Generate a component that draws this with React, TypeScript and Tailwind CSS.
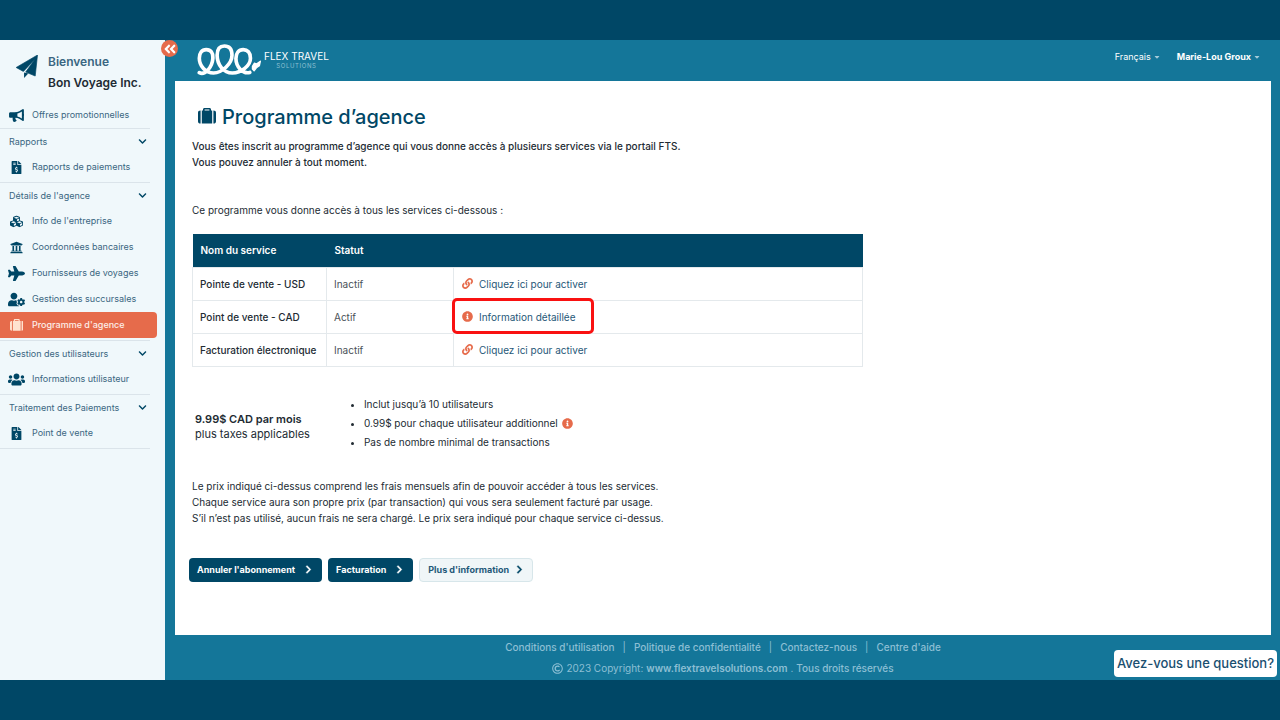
import type { ComponentType, ReactNode } from "react";
import {
  FaAngleDoubleLeft,
  FaCaretDown,
  FaChevronDown,
  FaChevronRight,
  FaCubes,
  FaFileInvoiceDollar,
  FaInfoCircle,
  FaLink,
  FaPlane,
  FaRegCopyright,
  FaUniversity,
  FaUserCog,
  FaUsers,
} from "react-icons/fa";

type IconProps = { className?: string };
type Item = { label: string; icon: ComponentType<IconProps>; wide?: boolean; active?: boolean };
type Group = { title: string; items: Item[] };

function Luggage({ className }: IconProps) {
  return (
    <svg viewBox="0 0 18 16" width="1.125em" height="1em" fill="currentColor" className={className} aria-hidden="true">
      <path d="M2.600 2.500v13C.8 15.500 0 14.600 0 13.200V4.800c0-1.400.8-2.300 2.600-2.300z" />
      <path d="M15.400 2.500v13c1.800 0 2.600-.9 2.600-2.300V4.800c0-1.400-.8-2.300-2.600-2.300z" />
      <path d="M3.800 2.500h1.200V1.500C5 .6 5.600 0 6.500 0h5c.9 0 1.500.6 1.500 1.500v1h1.200v13H3.800zM6.600 1.500v1h4.800v-1z" />
    </svg>
  );
}

function Megaphone({ className }: IconProps) {
  return (
    <svg viewBox="0 0 16 14" width="1.15em" height="1em" fill="currentColor" className={className} aria-hidden="true">
      <path
        fillRule="evenodd"
        d="M15 0c.6 0 1 .4 1 1v4.500c.4.6.4 1.400 0 2V12c0 .7-.6 1.100-1.200.8C12 11 10 9.700 7 9.500c-.5 1.300.3 2.100 1.300 3-.8 1.500-3 1.700-3.800 1C4 12.300 3.600 10.900 4 9.500H1.500C.6 9.500 0 8.900 0 8V5c0-.9.6-1.500 1.500-1.500H6C10 3.500 12.500 1.500 15 0zM13.800 2.700C12 4 10.500 4.600 9 4.900v3.200c1.700.3 3.200 1 4.800 2z"
      />
    </svg>
  );
}

function PaperPlane({ className }: IconProps) {
  return (
    <svg viewBox="0 0 66 70" fill="currentColor" className={className} aria-hidden="true">
      <path d="M65 0L0 38l22 12L57 13 29 52l29 12z" stroke="currentColor" strokeWidth="2" strokeLinejoin="round" />
      <path d="M24 53v17l13-14z" />
    </svg>
  );
}

function Logo() {
  return (
    <svg viewBox="0 0 200 100" className="h-[33px] w-[66px]" fill="none" aria-hidden="true">
      <path
        d="M7 87C24 96 46 70 48 44C49 26 42 17 28 17C14 17 7 28 7 43C7 66 26 88 50 88C76 87 106 60 106 34C106 14 97 6 83 6C69 6 61 16 61 34C61 62 80 88 107 88C134 87 162 66 162 43C162 26 153 17 140 17C126 17 118 28 118 44C118 68 138 92 160 86"
        stroke="#fff"
        strokeWidth="11"
        strokeLinecap="round"
      />
      <path d="M168 68l6-10 6 3 12-9-3 14-9 6-7 9-5-5z" fill="#fff" stroke="#fff" strokeWidth="4" strokeLinejoin="round" />
    </svg>
  );
}

const groups: Group[] = [
  { title: "Rapports", items: [{ label: "Rapports de paiements", icon: FaFileInvoiceDollar }] },
  {
    title: "Détails de l'agence",
    items: [
      { label: "Info de l'entreprise", icon: FaCubes },
      { label: "Coordonnées bancaires", icon: FaUniversity },
      { label: "Fournisseurs de voyages", icon: FaPlane, wide: true },
      { label: "Gestion des succursales", icon: FaUserCog, wide: true },
      { label: "Programme d'agence", icon: Luggage, active: true },
    ],
  },
  { title: "Gestion des utilisateurs", items: [{ label: "Informations utilisateur", icon: FaUsers, wide: true }] },
  { title: "Traitement des Paiements", items: [{ label: "Point de vente", icon: FaFileInvoiceDollar }] },
];

const services = [
  { name: "Pointe de vente - USD", status: "Inactif", action: "Cliquez ici pour activer", icon: FaLink, marked: false },
  { name: "Point de vente - CAD", status: "Actif", action: "Information détaillée", icon: FaInfoCircle, marked: true },
  { name: "Facturation électronique", status: "Inactif", action: "Cliquez ici pour activer", icon: FaLink, marked: false },
];

const footerLinks = ["Conditions d'utilisation", "Politique de confidentialité", "Contactez-nous", "Centre d'aide"];

function NavItem({ label, icon: Icon, wide, active }: Item) {
  return (
    <a
      href="#"
      className={
        active
          ? "mr-2 flex h-[26px] items-center rounded-r bg-[#e66b4b] text-[9px] font-medium text-[#fdeee9]"
          : "mr-2 flex h-[26px] items-center text-[9px] text-[#3a6681]"
      }
    >
      <span className={active ? "flex w-8 justify-center pl-px text-[#ffe3d0]" : "flex w-8 justify-center pl-px text-[#004766]"}>
        <Icon className={wide ? "text-[17px]" : active ? "text-xs" : "text-[13px]"} />
      </span>
      {label}
    </a>
  );
}

function DarkButton({ children }: { children: ReactNode }) {
  return (
    <button
      type="button"
      className="flex h-6 items-center gap-[9px] rounded-sm bg-[#004766] pr-[9px] pl-2 text-[9px] font-bold text-white"
    >
      {children}
      <FaChevronRight className="text-[9px]" stroke="currentColor" strokeWidth="20" />
    </button>
  );
}

export default function App() {
  return (
    <div className="flex min-h-screen flex-col bg-[#004766] py-10 font-['Inter',sans-serif] text-[#222b33]">
      <div className="flex flex-1 bg-[#147699]">
        <aside className="w-[165px] shrink-0 bg-[#f0f8fb]">
          <div className="flex h-[62px] gap-2 pt-[11px] pl-4">
            <PaperPlane className="mt-1 h-[23px] w-[22px] shrink-0 text-[#004766]" />
            <div className="pl-[2px] text-xs leading-[21px] font-semibold whitespace-nowrap">
              <p className="text-[#3a6681]">Bienvenue</p>
              <p>Bon Voyage Inc.</p>
            </div>
          </div>
          <nav>
            <NavItem label="Offres promotionnelles" icon={Megaphone} />
            {groups.map((group) => (
              <section key={group.title} className="pb-[2px]">
                <button
                  type="button"
                  className="flex h-[26px] w-[150px] items-center justify-between border-t border-[#dbe4ea] pr-[3px] pl-[9px] text-[9px] text-[#3a6681]"
                >
                  {group.title}
                  <FaChevronDown className="text-[9px] text-[#004766]" />
                </button>
                {group.items.map((item) => (
                  <NavItem key={item.label} {...item} />
                ))}
              </section>
            ))}
            <div className="w-[150px] border-t border-[#dbe4ea]" />
          </nav>
        </aside>

        <div className="relative flex min-w-0 flex-1 flex-col pr-[9px] pl-[10px]">
          <button
            type="button"
            aria-label="Réduire le menu"
            className="absolute top-0 -left-1 flex size-[17px] items-center justify-center rounded-full bg-[#e66b4b] text-sm text-white"
          >
            <FaAngleDoubleLeft />
          </button>
          <header className="flex h-[41px] items-center justify-between pr-[10px] pl-[22px] text-white">
            <div className="flex items-center gap-px">
              <Logo />
              <div className="pb-px text-center">
                <p className="text-[10px] leading-[11px]">FLEX TRAVEL</p>
                <p className="text-[6px] leading-2 tracking-widest text-[#8fc0d2]">SOLUTIONS</p>
              </div>
            </div>
            <div className="flex gap-4 pb-2 text-[9px]">
              <button type="button" className="flex items-center gap-[2px]">
                Français <FaCaretDown className="text-[8px] text-[#a5cbd9]" />
              </button>
              <button type="button" className="flex items-center gap-[2px] font-bold">
                Marie-Lou Groux <FaCaretDown className="text-[8px] text-[#a5cbd9]" />
              </button>
            </div>
          </header>

          <main className="flex-1 bg-white px-[17px] pt-6 text-[10px] leading-4">
            <h1 className="flex items-center gap-[6px] pl-[6px] text-xl leading-6 font-medium text-[#004766]">
              <Luggage className="mb-[2px] text-base" />
              Programme d’agence
            </h1>
            <p className="mt-[9px] font-medium">
              Vous êtes inscrit au programme d’agence qui vous donne accès à plusieurs services via le portail FTS.
              <br />
              Vous pouvez annuler à tout moment.
            </p>
            <p className="mt-8">Ce programme vous donne accès à tous les services ci-dessous :</p>

            <table className="mt-4 w-full max-w-[671px] table-fixed border-collapse text-left">
              <colgroup>
                <col className="w-[134px]" />
                <col className="w-[127px]" />
                <col />
              </colgroup>
              <thead>
                <tr className="h-[33px] bg-[#004766] text-white">
                  <th className="px-2 font-semibold">Nom du service</th>
                  <th className="px-2 font-semibold">Statut</th>
                  <th />
                </tr>
              </thead>
              <tbody>
                {services.map(({ name, status, action, icon: Icon, marked }) => (
                  <tr key={name} className="h-[33px]">
                    <td className="border border-[#e4e9ec] px-[7px] font-medium whitespace-nowrap">{name}</td>
                    <td className="border border-[#e4e9ec] px-[7px] text-[#4a5158]">{status}</td>
                    <td className="relative border border-[#e4e9ec] px-2">
                      <a href="#" className="flex items-center gap-[6px] text-[#1f5878]">
                        <Icon className="text-[11px] text-[#e66b4b]" />
                        {action}
                      </a>
                      {marked && (
                        <span className="pointer-events-none absolute -top-[3px] -left-[2px] h-9 w-[142px] rounded-[5px] border-[3px] border-[#f91111]" />
                      )}
                    </td>
                  </tr>
                ))}
              </tbody>
            </table>

            <div className="mt-7 flex items-center gap-[50px] pl-[3px]">
              <p className="pt-2 text-[11px] leading-[15px]">
                <strong className="font-semibold">9.99$ CAD par mois</strong>
                <br />
                plus taxes applicables
              </p>
              <ul className="list-disc pl-1 leading-[19px]">
                <li>Inclut jusqu’à 10 utilisateurs</li>
                <li>
                  0.99$ pour chaque utilisateur additionnel
                  <FaInfoCircle className="ml-1 inline text-[11px] text-[#e66b4b]" />
                </li>
                <li>Pas de nombre minimal de transactions</li>
              </ul>
            </div>

            <p className="mt-[26px]">
              Le prix indiqué ci-dessus comprend les frais mensuels afin de pouvoir accéder à tous les services.
              <br />
              Chaque service aura son propre prix (par transaction) qui vous sera seulement facturé par usage.
              <br />
              S’il n’est pas utilisé, aucun frais ne sera chargé. Le prix sera indiqué pour chaque service ci-dessus.
            </p>

            <div className="-ml-[3px] mt-8 mb-12 flex gap-[6px]">
              <DarkButton>Annuler l'abonnement</DarkButton>
              <DarkButton>Facturation</DarkButton>
              <button
                type="button"
                className="flex h-6 items-center gap-[6px] rounded-sm border border-[#d7e6ea] bg-[#f0f6f8] px-2 text-[9px] font-bold text-[#1f5878]"
              >
                Plus d'information
                <FaChevronRight className="text-[9px] text-[#004766]" stroke="currentColor" strokeWidth="20" />
              </button>
            </div>
          </main>

          <footer className="flex h-[45px] flex-col items-center pt-1 text-[10px] leading-4 text-[#8cbfd4]">
            <nav className="flex font-medium">
              {footerLinks.map((link, i) => (
                <a key={link} href="#" className="flex">
                  {i > 0 && <span className="px-2 font-normal">|</span>}
                  {link}
                </a>
              ))}
            </nav>
            <p className="mt-[5px] flex items-center gap-[3px]">
              <FaRegCopyright className="text-[11px]" />
              2023 Copyright: <a href="#" className="font-semibold">www.flextravelsolutions.com</a> .
              <span className="font-medium">Tous droits réservés</span>
            </p>
          </footer>
          <button
            type="button"
            className="absolute right-[3px] bottom-[3px] h-[27px] rounded-sm bg-white px-[3px] text-[13px] font-medium text-[#1a4f70]"
          >
            Avez-vous une question?
          </button>
        </div>
      </div>
    </div>
  );
}
